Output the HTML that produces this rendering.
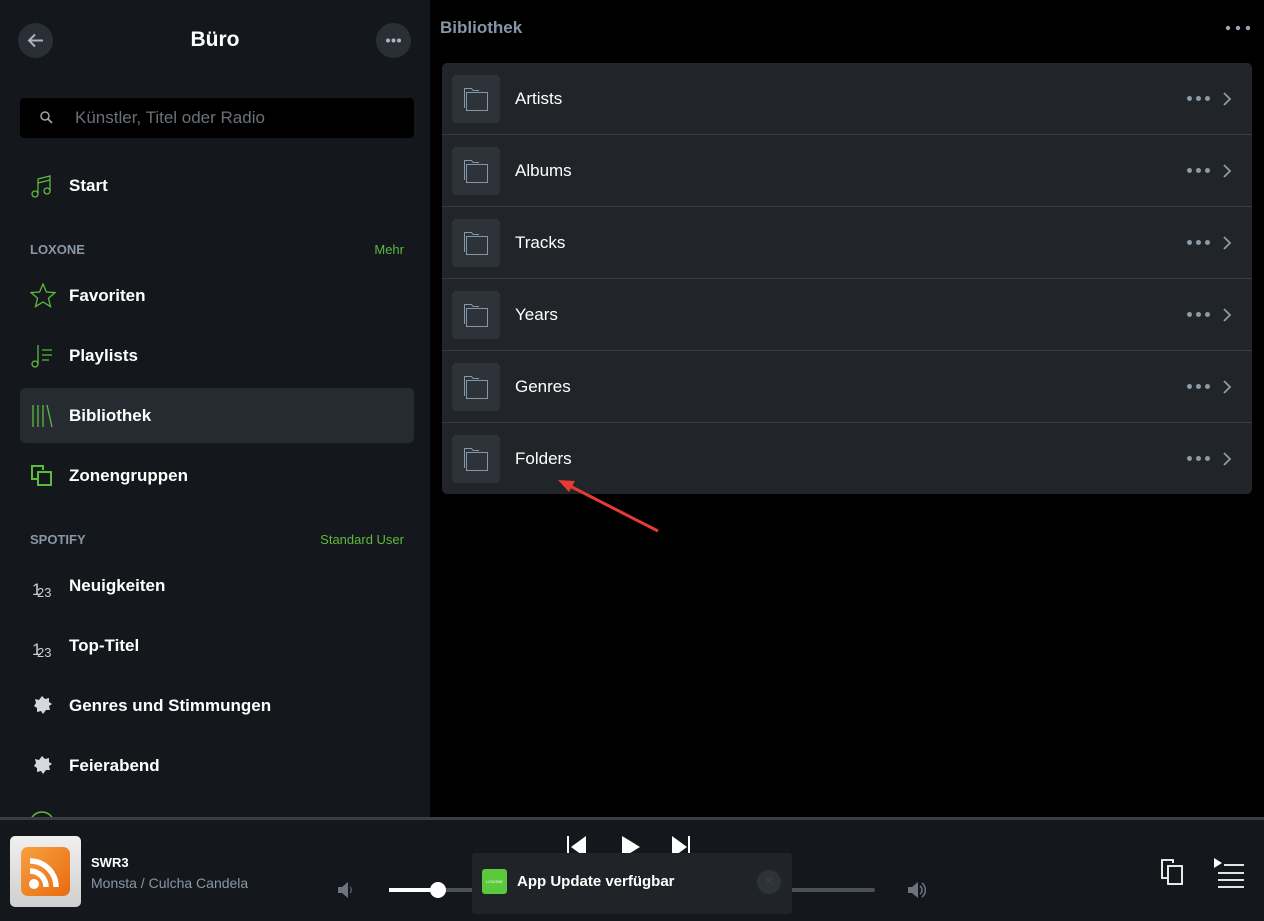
<!DOCTYPE html>
<html><head><meta charset="utf-8"><style>
*{box-sizing:border-box;margin:0;padding:0}
body{width:1264px;height:921px;overflow:hidden;background:#000;font-family:"Liberation Sans",sans-serif;position:relative;color:#fff}
.side{position:absolute;left:0;top:0;width:430px;height:817px;background:#14171b;overflow:hidden}
.circ{position:absolute;width:35px;height:35px;border-radius:50%;background:#2a2f36;top:23px}
.title{position:absolute;top:28px;left:0;width:430px;text-align:center;font-size:21px;font-weight:bold}
.search{position:absolute;left:20px;top:98px;width:394px;height:40px;background:#000;border-radius:4px}
.search span{position:absolute;left:55px;top:10px;font-size:17px;color:#6b7178}
.item{position:absolute;left:20px;width:394px;height:55px;border-radius:5px}
.item .t{position:absolute;left:49px;top:18px;font-size:17px;font-weight:bold}
.item svg{position:absolute;left:10px;top:15px}
.sec{position:absolute;left:30px;font-size:13px;font-weight:bold;color:#8a97a6}
.more{position:absolute;right:26px;font-size:13px;color:#5cba3c}
.hdr{position:absolute;left:440px;top:18px;font-size:17px;font-weight:bold;color:#8596a8}
.card{position:absolute;left:442px;top:63px;width:810px;height:431px;background:#212428;border-radius:5px;overflow:hidden}
.row{position:absolute;left:0;width:810px;height:72px;border-bottom:1px solid #383c42}
.row:last-child{border-bottom:none}
.ic{position:absolute;left:10px;top:12px;width:48px;height:48px;background:#2e333a;border-radius:4px}
.row .t{position:absolute;left:73px;top:26px;font-size:17px}
.dots{position:absolute;right:42px;top:33px;display:flex;gap:4px}
.dots i{display:block;width:5px;height:5px;border-radius:50%;background:#8d9aaa}
.chev{position:absolute;right:20px;top:29px}
.bar{position:absolute;left:0;top:817px;width:1264px;height:104px;background:#14171b;border-top:3px solid #3a3e44}
</style></head><body>
<div class="side">
<div class="circ" style="left:18px"><svg width="35" height="35"><path d="M25 17.5H11M17 11.5l-6 6 6 6" stroke="#a8b4c2" stroke-width="2" fill="none"/></svg></div>
<div class="title">Büro</div>
<div class="circ" style="left:376px"><svg width="35" height="35"><circle cx="12" cy="17.5" r="2" fill="#a8b4c2"/><circle cx="17.5" cy="17.5" r="2" fill="#a8b4c2"/><circle cx="23" cy="17.5" r="2" fill="#a8b4c2"/></svg></div>
<div class="search"><svg width="20" height="20" style="position:absolute;left:18px;top:11px"><circle cx="7" cy="7" r="4" stroke="#9aa3ad" stroke-width="1.5" fill="none"/><path d="M10 10l4 4" stroke="#9aa3ad" stroke-width="1.8"/></svg><span>Künstler, Titel oder Radio</span></div>
<div class="item" style="top:158px"><svg width="24" height="26"><g stroke="#5cba3c" stroke-width="1.3" fill="none"><circle cx="5" cy="21" r="3"/><circle cx="17" cy="18" r="3"/><path d="M8 21V6l12-3v15M8 10l12-3"/></g></svg><span class="t">Start</span></div>
<div class="sec" style="top:242px">LOXONE</div><div class="more" style="top:242px">Mehr</div>
<div class="item" style="top:268px"><svg width="26" height="26"><path d="M13 1l3.4 8 8.6.6-6.6 5.6 2.1 8.4L13 19l-7.5 4.6 2.1-8.4L1 9.6 9.6 9z" stroke="#5cba3c" stroke-width="1.3" fill="none"/></svg><span class="t">Favoriten</span></div>
<div class="item" style="top:328px"><svg width="26" height="26"><g stroke="#5cba3c" stroke-width="1.3" fill="none"><circle cx="5" cy="21" r="3"/><path d="M8 21V2M12 7h10M12 12h10M12 17h7"/></g></svg><span class="t">Playlists</span></div>
<div class="item" style="top:388px;background:#262b32"><svg width="26" height="26"><g stroke="#5cba3c" stroke-width="1.3"><path d="M3 2v22M8 2v22M13 2v22M17 2l5 22"/></g></svg><span class="t">Bibliothek</span></div>
<div class="item" style="top:448px"><svg width="26" height="26"><g stroke="#5cba3c" stroke-width="2" fill="none"><path d="M13 7V3H2v13h5"/><rect x="8" y="9" width="13" height="13"/></g></svg><span class="t">Zonengruppen</span></div>
<div class="sec" style="top:532px">SPOTIFY</div><div class="more" style="top:532px">Standard User</div>
<div class="item" style="top:558px"><svg width="26" height="26"><text x="2" y="22" font-size="17" fill="#c9ced4" font-family="Liberation Sans">1</text><text x="7" y="24" font-size="13" fill="#c9ced4" font-family="Liberation Sans">23</text></svg><span class="t">Neuigkeiten</span></div>
<div class="item" style="top:618px"><svg width="26" height="26"><text x="2" y="22" font-size="17" fill="#c9ced4" font-family="Liberation Sans">1</text><text x="7" y="24" font-size="13" fill="#c9ced4" font-family="Liberation Sans">23</text></svg><span class="t">Top-Titel</span></div>
<div class="item" style="top:678px"><svg width="26" height="26"><path d="M12 3l3 3 4-1 0 4 3 2-3 2 1 4-4 0-3 4-2-3-4 1 0-4-3-2 2-3-1-4 4 1z" fill="#d5d9de"/></svg><span class="t">Genres und Stimmungen</span></div>
<div class="item" style="top:738px"><svg width="26" height="26"><path d="M12 3l3 3 4-1 0 4 3 2-3 2 1 4-4 0-3 4-2-3-4 1 0-4-3-2 2-3-1-4 4 1z" fill="#d5d9de"/></svg><span class="t">Feierabend</span></div>
<svg width="30" height="10" style="position:absolute;left:28px;top:810px"><circle cx="14" cy="14" r="12" stroke="#5cba3c" stroke-width="1.5" fill="none"/></svg>
</div>
<div class="hdr">Bibliothek</div>
<svg width="30" height="10" style="position:absolute;left:1224px;top:23px"><circle cx="4" cy="5" r="2.2" fill="#9aa7b6"/><circle cx="14" cy="5" r="2.2" fill="#9aa7b6"/><circle cx="24" cy="5" r="2.2" fill="#9aa7b6"/></svg>
<div class="card">
<div class="row" style="top:0"><div class="ic"><svg width="48" height="48"><g stroke="#8596a8" fill="none" stroke-width="1"><path d="M12.5 33V13.5h7l1.5 2h6"/><path d="M14.5 35.5V17.5h21v18z"/></g></svg></div><span class="t">Artists</span><span class="dots"><i></i><i></i><i></i></span><svg class="chev" width="10" height="14"><path d="M2 1l6 6-6 6" stroke="#8d9aaa" stroke-width="1.8" fill="none"/></svg></div>
<div class="row" style="top:72px"><div class="ic"><svg width="48" height="48"><g stroke="#8596a8" fill="none" stroke-width="1"><path d="M12.5 33V13.5h7l1.5 2h6"/><path d="M14.5 35.5V17.5h21v18z"/></g></svg></div><span class="t">Albums</span><span class="dots"><i></i><i></i><i></i></span><svg class="chev" width="10" height="14"><path d="M2 1l6 6-6 6" stroke="#8d9aaa" stroke-width="1.8" fill="none"/></svg></div>
<div class="row" style="top:144px"><div class="ic"><svg width="48" height="48"><g stroke="#8596a8" fill="none" stroke-width="1"><path d="M12.5 33V13.5h7l1.5 2h6"/><path d="M14.5 35.5V17.5h21v18z"/></g></svg></div><span class="t">Tracks</span><span class="dots"><i></i><i></i><i></i></span><svg class="chev" width="10" height="14"><path d="M2 1l6 6-6 6" stroke="#8d9aaa" stroke-width="1.8" fill="none"/></svg></div>
<div class="row" style="top:216px"><div class="ic"><svg width="48" height="48"><g stroke="#8596a8" fill="none" stroke-width="1"><path d="M12.5 33V13.5h7l1.5 2h6"/><path d="M14.5 35.5V17.5h21v18z"/></g></svg></div><span class="t">Years</span><span class="dots"><i></i><i></i><i></i></span><svg class="chev" width="10" height="14"><path d="M2 1l6 6-6 6" stroke="#8d9aaa" stroke-width="1.8" fill="none"/></svg></div>
<div class="row" style="top:288px"><div class="ic"><svg width="48" height="48"><g stroke="#8596a8" fill="none" stroke-width="1"><path d="M12.5 33V13.5h7l1.5 2h6"/><path d="M14.5 35.5V17.5h21v18z"/></g></svg></div><span class="t">Genres</span><span class="dots"><i></i><i></i><i></i></span><svg class="chev" width="10" height="14"><path d="M2 1l6 6-6 6" stroke="#8d9aaa" stroke-width="1.8" fill="none"/></svg></div>
<div class="row" style="top:360px"><div class="ic"><svg width="48" height="48"><g stroke="#8596a8" fill="none" stroke-width="1"><path d="M12.5 33V13.5h7l1.5 2h6"/><path d="M14.5 35.5V17.5h21v18z"/></g></svg></div><span class="t">Folders</span><span class="dots"><i></i><i></i><i></i></span><svg class="chev" width="10" height="14"><path d="M2 1l6 6-6 6" stroke="#8d9aaa" stroke-width="1.8" fill="none"/></svg></div>
</div>
<svg width="120" height="70" style="position:absolute;left:550px;top:470px"><path d="M108 61L16 14" stroke="#e53b35" stroke-width="3"/><path d="M8 10l17 1-6 11z" fill="#e53b35"/></svg>
<div class="bar">
<div style="position:absolute;left:10px;top:16px;width:71px;height:71px;background:linear-gradient(#f0f0f0,#cfcfcf);border-radius:5px"><div style="position:absolute;left:11px;top:11px;width:49px;height:49px;border-radius:7px;background:linear-gradient(135deg,#f9a040,#e86a10)"><svg width="49" height="49"><circle cx="13" cy="37" r="5" fill="#fff"/><path d="M9 24a16 16 0 0 1 16 16M9 14a26 26 0 0 1 26 26" stroke="#fff" stroke-width="5.5" fill="none"/></svg></div></div>
<div style="position:absolute;left:91px;top:35px;font-size:13px;font-weight:bold">SWR3</div>
<div style="position:absolute;left:91px;top:55px;font-size:14px;color:#8a97a6">Monsta / Culcha Candela</div>
<svg width="20" height="20" style="position:absolute;left:336px;top:60px"><path d="M2 7h4l6-5v16l-6-5H2z" fill="#6b7580"/><path d="M14 7a4 4 0 0 1 0 6" stroke="#6b7580" fill="none"/></svg>
<div style="position:absolute;left:389px;top:68px;width:486px;height:4px;background:#4a5058;border-radius:2px"></div>
<div style="position:absolute;left:389px;top:68px;width:49px;height:4px;background:#fff"></div>
<div style="position:absolute;left:430px;top:62px;width:16px;height:16px;border-radius:50%;background:#fff"></div>
<svg width="20" height="20" style="position:absolute;left:906px;top:60px"><path d="M2 7h4l6-5v16l-6-5H2z" fill="#6b7580"/><path d="M14 6a5 5 0 0 1 0 8M16 3a9 9 0 0 1 0 14" stroke="#6b7580" fill="none" stroke-width="1.5"/></svg>
<svg width="140" height="30" style="position:absolute;left:560px;top:12px"><rect x="7" y="4" width="2" height="22" fill="#fff"/><path d="M26 4v22L11 15z" fill="#fff"/><path d="M62 4l18 11-18 11z" fill="#fff"/><path d="M112 4l15 11-15 11z" fill="#fff"/><rect x="128" y="4" width="2" height="22" fill="#fff"/></svg>
<div style="position:absolute;left:472px;top:33px;width:320px;height:61px;background:#202327;border-radius:3px"><div style="position:absolute;left:10px;top:16px;width:25px;height:25px;background:#5cc83c;border-radius:3px;font-size:4px;color:#fff;text-align:center;line-height:25px">LOXONE</div><span style="position:absolute;left:45px;top:20px;font-size:15px;font-weight:bold">App Update verfügbar</span><div style="position:absolute;left:285px;top:17px;width:24px;height:24px;border-radius:50%;background:#2e333a;color:#3a4048;text-align:center;line-height:24px;font-size:16px">×</div></div>
<svg width="34" height="30" style="position:absolute;left:1160px;top:38px"><g stroke="#fff" stroke-width="1.8" fill="none"><path d="M13 5V2H2v18h5"/><rect x="8" y="8" width="14" height="18"/></g></svg>
<svg width="34" height="32" style="position:absolute;left:1212px;top:36px"><path d="M2 2l8 5-8 5z" fill="#fff"/><g stroke="#fff" stroke-width="1.8"><path d="M12 9h20M6 17h26M6 24h26M6 31h26"/></g></svg>
</div>
</body></html>
